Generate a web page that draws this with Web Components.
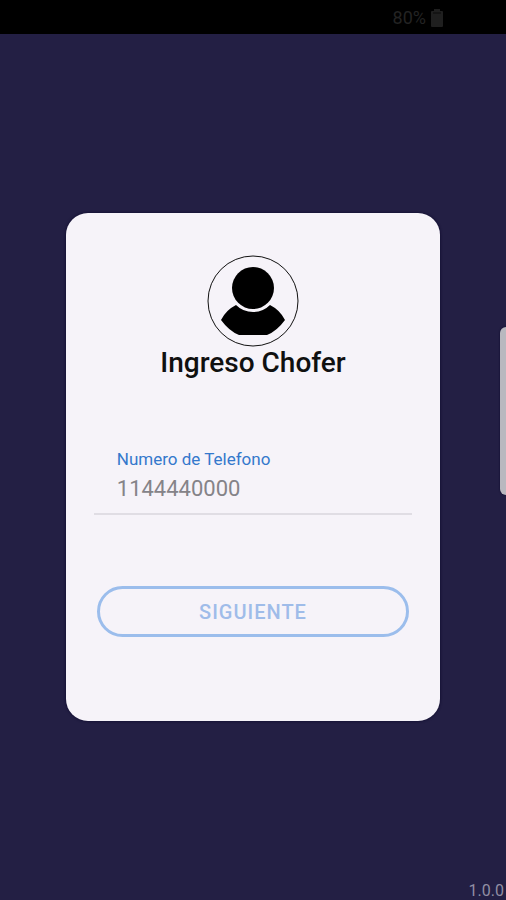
<!DOCTYPE html>
<html lang="es">
<head>
<meta charset="utf-8">
<meta name="viewport" content="width=device-width, initial-scale=1">
<title>Ingreso Chofer</title>
<style>
  html, body { margin: 0; height: 100%; background: #231f44; }
  body { font-family: Roboto, "Liberation Sans", sans-serif; }
</style>
</head>
<body>
<driver-app></driver-app>
<script>
const define = (name, html) => {
  const template = document.createElement('template');
  template.innerHTML = html;
  customElements.define(name, class extends HTMLElement {
    constructor() {
      super();
      this.attachShadow({ mode: 'open' }).append(template.content.cloneNode(true));
    }
  });
};

define('status-bar', `
  <style>
    :host { display: flex; align-items: center; justify-content: flex-end; gap: 5px;
      box-sizing: border-box; height: 34px; padding: 2px 63px 0 0; background: #000; color: #232323;
      font-size: 18px; line-height: 24px; }
    svg { display: block; }
  </style>
  <slot></slot>
  <svg width="12" height="18" viewBox="0 0 12 18" aria-hidden="true">
    <path d="M3 0h6v2h2q1 0 1 1v14q0 1-1 1H1q-1 0-1-1V3q0-1 1-1h2z" fill="#1f1f1f"/>
    <path d="M2 4h8" stroke="#0a0a0a" stroke-width="1"/>
  </svg>`);

define('user-avatar', `
  <style>
    :host { display: block; }
    svg { display: block; }
  </style>
  <svg width="92" height="92" viewBox="0 0 92 92" role="img" aria-label="Chofer">
    <circle cx="46" cy="46" r="45" fill="none" stroke="#111" stroke-width="1"/>
    <circle cx="46" cy="33" r="21" fill="#000"/>
    <path d="M29 50 Q36 57 46 57 Q56 57 63 50 Q73 55 78 65 Q70 76 60 80 H32 Q22 76 14 65 Q19 55 29 50Z" fill="#000"/>
  </svg>`);

define('login-card', `
  <style>
    :host { display: flex; flex-direction: column; align-items: center; box-sizing: border-box;
      padding: 42px 28px 84px; border-radius: 22px; background: #f6f3f9;
      box-shadow: 0 0 3px #0a0628; }
    h1 { margin: 0 0 68px; color: #101010; font-size: 28px; line-height: 32px; font-weight: 500; }
  </style>
  <user-avatar></user-avatar>
  <h1><slot name="title"></slot></h1>
  <slot></slot>`);

define('phone-field', `
  <style>
    :host { display: flex; flex-direction: column; align-self: stretch; box-sizing: border-box;
      margin-bottom: 71px; padding: 0 0 6px 23px; border-bottom: 2px solid #e0dde4; }
    label { color: #3478cc; font-size: 17px; line-height: 24px; }
    input { box-sizing: border-box; width: 100%; height: 36px; margin: 0; padding: 0; border: 0;
      outline: 0; background: transparent; color: #858388; font: 22px/36px Roboto, "Liberation Sans", sans-serif; }
  </style>
  <label for="phone">Numero de Telefono</label>
  <input id="phone" type="tel" value="1144440000">`);

define('pill-button', `
  <style>
    :host { display: flex; align-self: stretch; padding: 0 3px; }
    button { flex: 1; box-sizing: border-box; height: 51px; margin: 0; padding: 0; border: 3px solid #9bbdec;
      border-radius: 26px; background: transparent; color: #9fbce9; letter-spacing: 1px;
      font-family: inherit; font-size: 20px; line-height: 24px; font-weight: 500; }
  </style>
  <button type="button"><slot></slot></button>`);

define('edge-handle', `
  <style>
    :host { display: block; position: absolute; right: 0; top: 327px; width: 6px; height: 168px;
      border-radius: 6px 0 0 6px; background: #b9b8bf; box-shadow: 0 0 2px #0a0628; }
  </style>`);

define('driver-app', `
  <style>
    :host { display: flex; flex-direction: column; position: relative; box-sizing: border-box;
      min-height: 100vh; overflow: hidden; background: #231f44; }
    main { flex: 1; display: grid; align-content: center; padding: 18px 13% 0; }
    footer { padding: 0 2px 0 0; color: #918ea3; font-size: 16px; line-height: 18px; text-align: right; }
  </style>
  <status-bar>80%</status-bar>
  <main>
    <login-card>
      <span slot="title">Ingreso Chofer</span>
      <phone-field></phone-field>
      <pill-button>SIGUIENTE</pill-button>
    </login-card>
  </main>
  <footer>1.0.0</footer>
  <edge-handle></edge-handle>`);
</script>
</body>
</html>
